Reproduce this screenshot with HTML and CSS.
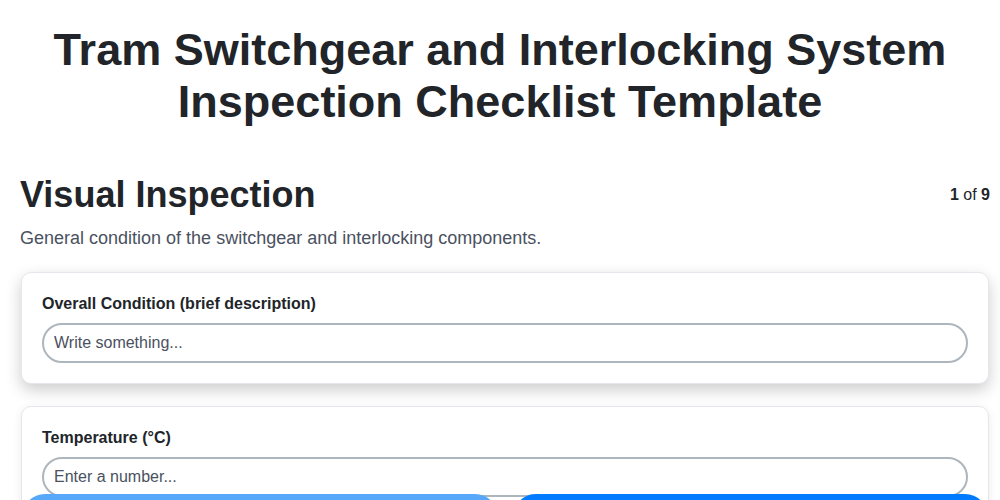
FILE: index.html
```html
<!DOCTYPE html>
<html lang="en">
<head>
  <meta charset="UTF-8">
  <meta name="viewport" content="width=device-width, initial-scale=1.0">
  <title>Tram Switchgear and Interlocking System Inspection Checklist Template</title>
  <link rel="stylesheet" href="styles.css">
</head>
<body>
  <header class="page-header">
    <h1>Tram Switchgear and Interlocking System Inspection Checklist Template</h1>
  </header>

  <main class="checklist">
    <div class="section-head">
      <h2>Visual Inspection</h2>
      <span class="step-count"><b>1</b> of <b>9</b></span>
    </div>
    <p class="section-desc">General condition of the switchgear and interlocking components.</p>

    <div class="card active">
      <label class="field-label" for="overall">Overall Condition (brief description)</label>
      <input class="field-input" id="overall" type="text" placeholder="Write something...">
    </div>

    <div class="card">
      <label class="field-label" for="temp">Temperature (°C)</label>
      <input class="field-input" id="temp" type="number" placeholder="Enter a number...">
    </div>
  </main>

  <!-- step buttons sit just under the fold -->
  <nav class="step-nav">
    <button class="nav-btn prev" aria-label="Previous" disabled></button>
    <button class="nav-btn next" aria-label="Next"></button>
  </nav>
</body>
</html>
```

FILE: styles.css
```css
body {
  margin: 0;
  font-family: "Liberation Sans", Arial, sans-serif;
  color: #212529;
  background: #fff;
}

.page-header h1 {
  margin: 0;
  padding: 24px 20px 0;
  text-align: center;
  font-size: 45px;
  line-height: 52px;
  font-weight: bold;
}

.checklist {
  padding: 45px 10px 120px 20px;
}

.section-head {
  display: flex;
  justify-content: space-between;
  align-items: center;
}

.section-head h2 {
  margin: 0;
  font-size: 36px;
  line-height: 44px;
}

.step-count {
  font-size: 16px;
}

.section-desc {
  margin: 11px 0 23px;
  font-size: 18px;
  color: #4a5160;
}

.card {
  border: 1px solid #e6e7ec;
  border-radius: 10px;
  padding: 20px;
  margin: 0 1px 22px 1px;
  background: #fff;
  box-shadow: 0 2px 10px rgba(0, 0, 0, 0.08);
}

.card.active {
  box-shadow: 0 6px 16px rgba(0, 0, 0, 0.2);
}

.field-label {
  display: block;
  font-size: 16px;
  font-weight: bold;
  line-height: 19px;
  margin: 1px 0 10px;
}

.field-input {
  display: block;
  box-sizing: border-box;
  width: 100%;
  height: 40px;
  padding: 0 10px;
  border: 2px solid #adb5bd;
  border-radius: 20px;
  font-family: inherit;
  font-size: 16px;
  color: #212529;
  background: #fff;
  outline: none;
}

.field-input::placeholder {
  color: #4a5160;
}

.step-nav {
  position: fixed;
  left: 22px;
  right: 12px;
  bottom: -40px;
  display: flex;
  gap: 15px;
}

.nav-btn {
  flex: 1;
  height: 46px;
  border: none;
  border-radius: 23px;
  background: #007bff;
}

.nav-btn.prev {
  background: #57a7fb;
}
```
